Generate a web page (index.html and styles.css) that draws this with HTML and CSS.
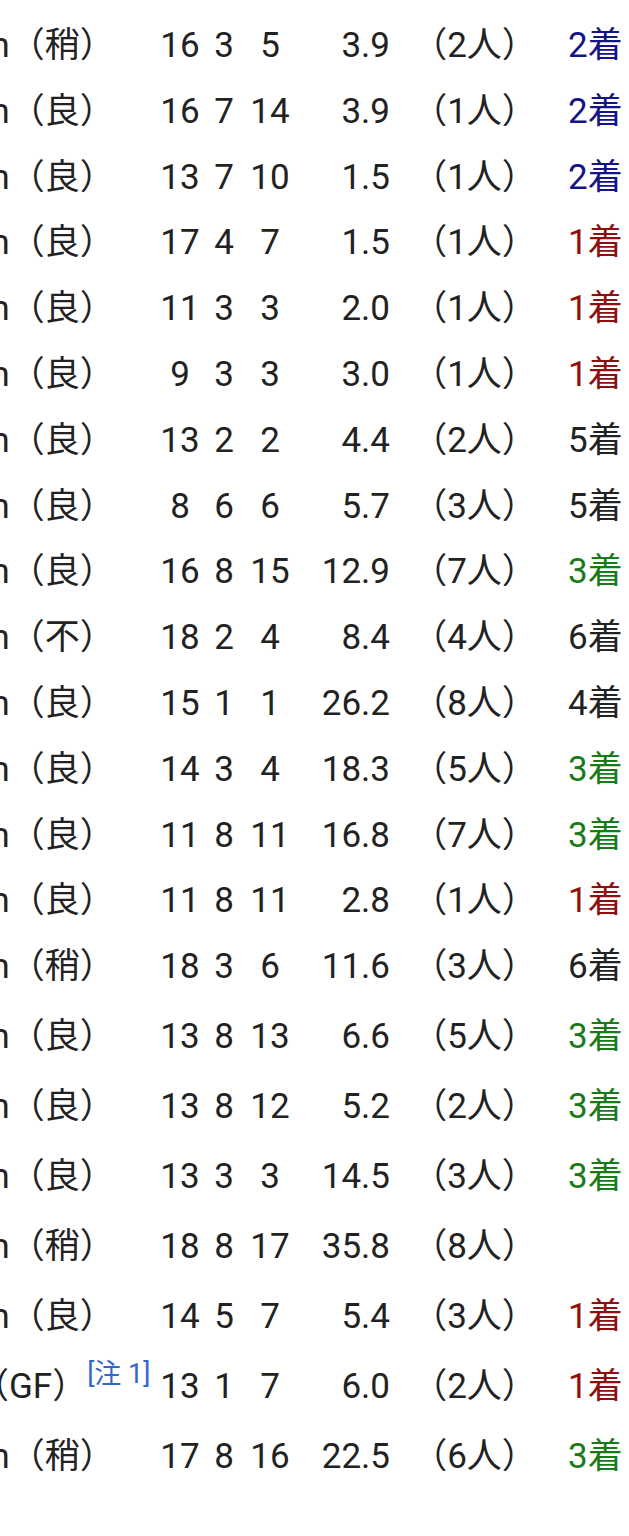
FILE: index.html
```html
<!DOCTYPE html>
<html lang="ja">
<head>
<meta charset="utf-8">
<title>戦績</title>
<link rel="stylesheet" href="styles.css">
</head>
<body>
<div class="clip">
<table class="results">
<colgroup>
<col class="c-course"><col class="c-field"><col class="c-gate"><col class="c-num"><col class="c-odds"><col class="c-pop"><col class="c-place">
</colgroup>
<tbody>
<tr class="r-a"><td class="course">芝1600m（稍）</td><td>16</td><td>3</td><td>5</td><td class="odds">3.9</td><td>（2人）</td><td class="place p2">2着</td></tr>
<tr class="r-a"><td class="course">芝1600m（良）</td><td>16</td><td>7</td><td>14</td><td class="odds">3.9</td><td>（1人）</td><td class="place p2">2着</td></tr>
<tr class="r-a"><td class="course">芝1600m（良）</td><td>13</td><td>7</td><td>10</td><td class="odds">1.5</td><td>（1人）</td><td class="place p2">2着</td></tr>
<tr class="r-a"><td class="course">芝1600m（良）</td><td>17</td><td>4</td><td>7</td><td class="odds">1.5</td><td>（1人）</td><td class="place p1">1着</td></tr>
<tr class="r-a"><td class="course">芝1600m（良）</td><td>11</td><td>3</td><td>3</td><td class="odds">2.0</td><td>（1人）</td><td class="place p1">1着</td></tr>
<tr class="r-a"><td class="course">芝1600m（良）</td><td>9</td><td>3</td><td>3</td><td class="odds">3.0</td><td>（1人）</td><td class="place p1">1着</td></tr>
<tr class="r-a"><td class="course">芝1600m（良）</td><td>13</td><td>2</td><td>2</td><td class="odds">4.4</td><td>（2人）</td><td class="place">5着</td></tr>
<tr class="r-a"><td class="course">芝1600m（良）</td><td>8</td><td>6</td><td>6</td><td class="odds">5.7</td><td>（3人）</td><td class="place">5着</td></tr>
<tr class="r-a"><td class="course">芝1600m（良）</td><td>16</td><td>8</td><td>15</td><td class="odds">12.9</td><td>（7人）</td><td class="place p3">3着</td></tr>
<tr class="r-a"><td class="course">芝1600m（不）</td><td>18</td><td>2</td><td>4</td><td class="odds">8.4</td><td>（4人）</td><td class="place">6着</td></tr>
<tr class="r-a"><td class="course">芝1600m（良）</td><td>15</td><td>1</td><td>1</td><td class="odds">26.2</td><td>（8人）</td><td class="place">4着</td></tr>
<tr class="r-a"><td class="course">芝1600m（良）</td><td>14</td><td>3</td><td>4</td><td class="odds">18.3</td><td>（5人）</td><td class="place p3">3着</td></tr>
<tr class="r-a"><td class="course">芝1600m（良）</td><td>11</td><td>8</td><td>11</td><td class="odds">16.8</td><td>（7人）</td><td class="place p3">3着</td></tr>
<tr class="r-a"><td class="course">芝1600m（良）</td><td>11</td><td>8</td><td>11</td><td class="odds">2.8</td><td>（1人）</td><td class="place p1">1着</td></tr>
<tr class="r-b"><td class="course">芝1600m（稍）</td><td>18</td><td>3</td><td>6</td><td class="odds">11.6</td><td>（3人）</td><td class="place">6着</td></tr>
<tr class="r-b"><td class="course">芝1600m（良）</td><td>13</td><td>8</td><td>13</td><td class="odds">6.6</td><td>（5人）</td><td class="place p3">3着</td></tr>
<tr class="r-b"><td class="course">芝1600m（良）</td><td>13</td><td>8</td><td>12</td><td class="odds">5.2</td><td>（2人）</td><td class="place p3">3着</td></tr>
<tr class="r-b"><td class="course">芝1600m（良）</td><td>13</td><td>3</td><td>3</td><td class="odds">14.5</td><td>（3人）</td><td class="place p3">3着</td></tr>
<tr class="r-b"><td class="course">芝1600m（稍）</td><td>18</td><td>8</td><td>17</td><td class="odds">35.8</td><td>（8人）</td><td class="place"></td></tr>
<tr class="r-b"><td class="course">芝1600m（良）</td><td>14</td><td>5</td><td>7</td><td class="odds">5.4</td><td>（3人）</td><td class="place p1">1着</td></tr>
<tr class="r-b"><td class="course">芝1600m（GF）<sup class="note">[注 1]</sup></td><td>13</td><td>1</td><td>7</td><td class="odds">6.0</td><td>（2人）</td><td class="place p1">1着</td></tr>
<tr class="r-b"><td class="course">芝1600m（稍）</td><td>17</td><td>8</td><td>16</td><td class="odds">22.5</td><td>（6人）</td><td class="place p3">3着</td></tr>
</tbody>
</table>
</div>
</body>
</html>
```

FILE: styles.css
```css
html, body {
  margin: 0;
  padding: 0;
  background: #ffffff;
}

.clip {
  width: 629px;
  overflow: hidden;
  padding-top: 12px;
}

.results {
  margin-left: -175px;
  border-collapse: collapse;
  table-layout: fixed;
  width: 804px;
  font-family: Roboto, "Noto Sans CJK JP", sans-serif;
  font-size: 35px;
  line-height: 40px;
  color: #222222;
}

.c-course { width: 330px; }
.c-field { width: 50px; }
.c-gate { width: 38px; }
.c-num { width: 54px; }
.c-odds { width: 95px; }
.c-pop { width: 165px; }
.c-place { width: 72px; }

.results td {
  padding: 14px 0 0 0;
  vertical-align: top;
  text-align: center;
  white-space: nowrap;
}

.r-a { height: 65.8px; }
.r-b { height: 70px; }

.results td.odds {
  text-align: right;
  padding-right: 2px;
}

.results td.place {
  text-align: left;
  padding-left: 11px;
}

.p1 { color: #8f0e0e; }
.p2 { color: #141489; }
.p3 { color: #197a19; }

.note {
  font-size: 27px;
  line-height: 0;
  color: #3366cc;
  vertical-align: 15px;
}
```
